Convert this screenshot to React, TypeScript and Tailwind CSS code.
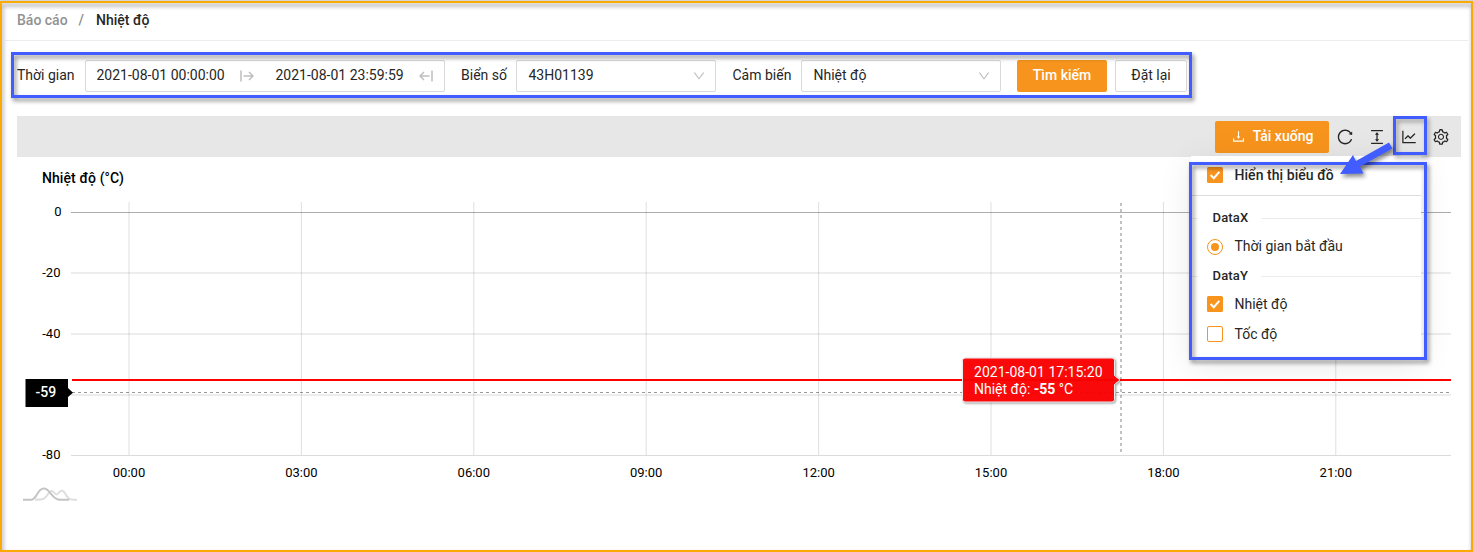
import React from "react";
import {
  AiOutlineColumnHeight,
  AiOutlineDown,
  AiOutlineDownload,
  AiOutlineLineChart,
  AiOutlineReload,
  AiOutlineSetting,
} from "react-icons/ai";

const yTicks = [
  { label: "0", y: 55.5, labelX: 61.5 },
  { label: "-20", y: 116, labelX: 60.5 },
  { label: "-40", y: 177, labelX: 60.5 },
  { label: "-60", y: 238, labelX: 60.5 },
  { label: "-80", y: 298.5, labelX: 60.5 },
];

const xTicks = [
  { label: "00:00", x: 129 },
  { label: "03:00", x: 301.4 },
  { label: "06:00", x: 473.8 },
  { label: "09:00", x: 646.2 },
  { label: "12:00", x: 818.6 },
  { label: "15:00", x: 991 },
  { label: "18:00", x: 1163.4 },
  { label: "21:00", x: 1335.8 },
];

function RangeArrow({ flip = false }: { flip?: boolean }) {
  return (
    <svg
      className={flip ? "-scale-x-100" : ""}
      width="14"
      height="12"
      viewBox="0 0 14 12"
      fill="none"
      stroke="#bfbfbf"
      strokeWidth="1.5"
    >
      <path d="M1 0.5V11.5M3.500 6H13M9 2L13 6L9 10" />
    </svg>
  );
}

function SelectBox({ value }: { value: string }) {
  return (
    <div className="flex h-8 w-[200px] items-center justify-between rounded-[2px] border border-[#d9d9d9] bg-white pl-[11.5px] pr-[9px]">
      <span className="relative -top-px">{value}</span>
      <AiOutlineDown className="size-[14px] text-[#bfbfbf]" />
    </div>
  );
}

function Check({ checked }: { checked: boolean }) {
  return checked ? (
    <svg width="16" height="16" viewBox="0 0 16 16" className="shrink-0">
      <rect width="16" height="16" rx="1.5" fill="#f7941d" />
      <path d="M3.6 8L6.8 11.2L12.3 4.9" fill="none" stroke="#fff" strokeWidth="2" />
    </svg>
  ) : (
    <span className="size-4 shrink-0 rounded-[2px] border border-[#f7941d] bg-white" />
  );
}

function Divider({ label }: { label: string }) {
  return (
    <div className="flex h-[18px] items-center text-[13px] font-medium">
      <span className="h-px w-[7px] bg-[#ececec]" />
      <span className="ml-[14.5px] mr-[12.5px] tracking-[0.15px]">{label}</span>
      <span className="h-px flex-1 bg-[#ececec]" />
    </div>
  );
}

function Chart() {
  return (
    <svg width="1444" height="395" viewBox="17 0 1444 395" className="block font-[Roboto,sans-serif]">
      <text x="42" y="26" fontSize="14" fontWeight="500" textLength="82">
        Nhiệt độ (°C)
      </text>
      <g stroke="#000" strokeOpacity="0.13">
        {xTicks.map((t) => (
          <line key={t.label} x1={t.x} x2={t.x} y1="45" y2="298" />
        ))}
        {yTicks.map((t, i) => (
          <line key={t.label} x1="71" x2="1451" y1={t.y} y2={t.y} strokeOpacity={i === 0 ? 0.32 : 0.14} />
        ))}
      </g>
      <g fontSize="13">
        {yTicks.filter((t) => t.label !== "-60").map((t) => (
          <text key={t.label} x={t.labelX} y={Math.floor(t.y) + 4} textAnchor="end">
            {t.label}
          </text>
        ))}
        {xTicks.map((t) => (
          <text key={t.label} x={t.x} y="320" textAnchor="middle">
            {t.label}
          </text>
        ))}
      </g>
      <g stroke="#000" strokeOpacity="0.4" strokeDasharray="3 3">
        <path d="M72 235.5H1451" />
        <path d="M1121 46V298" strokeWidth="2" strokeOpacity="0.24" />
      </g>
      <path d="M72 223H1451" stroke="#f00" strokeWidth="2" />
      <path d="M25.5 222H68V231L73 235.8L68 240V250H25.5Z" fill="#000" />
      <text x="45.8" y="240" fontSize="14" fill="#fff" textAnchor="middle" fontWeight="500">
        -59
      </text>
      <path
        d="M965 201H1112Q1114.500 201 1114.500 203.500V218.500L1120 223L1114.500 227.500V242.500Q1114.500 245 1112 245H965Q962.500 245 962.500 242.500V203.500Q962.500 201 965 201Z"
        fill="#f00"
        fillOpacity="0.94"
        stroke="#eee"
        strokeWidth="1"
        className="drop-shadow-[1px_1px_1px_rgba(0,0,0,0.4)]"
      />
      <g fill="#fff" fontSize="14">
        <text x="974" y="220" textLength="128.500">
          2021-08-01 17:15:20
        </text>
        <text x="974" y="237">
          Nhiệt độ: <tspan fontWeight="700">-55</tspan> °C
        </text>
      </g>
      <g fill="none" strokeWidth="2">
        <path
          d="M35 342.800C45 342.800 45 341.500 48 337C50 334 52 333 54 335.500C56 338 57 338 59 335.500C62 332 64 334 66 338C69 342.500 69 342.800 77 342.800"
          stroke="#dedede"
        />
        <path d="M23 342.800H31C37 342.800 37 331.500 44 331.500C50 331.500 52 342.800 60 342.800H69" stroke="#c4c4c4" />
      </g>
    </svg>
  );
}

export default function App() {
  return (
    <div className="relative h-[552px] w-[1473px] overflow-hidden bg-white px-[5px] font-[Roboto,sans-serif] text-[14px] text-[#262626]">
      <header className="flex h-[41px] items-center border-b border-[#ededed] pl-3 font-medium">
        <span className="text-[#929292]">Báo cáo</span>
        <span className="ml-[11px] mr-3 text-[#8c8c8c]">/</span>
        <span>Nhiệt độ</span>
      </header>

      <div className="mt-[19px] flex h-8 items-center pl-3">
        <span className="relative -top-px w-[68px]">Thời gian</span>
        <div className="flex h-8 w-[360px] items-center rounded-[2px] border border-[#d9d9d9]">
          <span className="relative -top-px ml-[10.5px] w-[128.5px] whitespace-nowrap">2021-08-01 00:00:00</span>
          <span className="ml-[15px]"><RangeArrow /></span>
          <span className="relative -top-px ml-[21.5px] w-[128.5px] whitespace-nowrap">2021-08-01 23:59:59</span>
          <span className="ml-[15px]"><RangeArrow flip /></span>
        </div>
        <span className="relative -top-px ml-4 w-[55px]">Biển số</span>
        <SelectBox value="43H01139" />
        <span className="relative -top-px ml-[16.5px] w-[68.5px]">Cảm biến</span>
        <SelectBox value="Nhiệt độ" />
        <button className="ml-4 h-8 w-[90px] rounded-[2px] bg-[#f7941d] pb-0.5 font-medium text-white">Tìm kiếm</button>
        <button className="ml-2 h-8 w-[72px] rounded-[2px] border border-[#d9d9d9] pb-0.5">Đặt lại</button>
      </div>

      <main className="mx-3 mr-[7px] mt-6">
        <div className="flex h-[41px] items-center justify-end bg-[#e7e7e7] pr-[11px]">
          <button className="mr-[7px] flex h-8 w-[114px] items-center justify-center gap-[7px] rounded-[2px] bg-[#f7941d] text-white">
            <AiOutlineDownload className="size-[15px]" />
            <span className="font-medium">Tải xuống</span>
          </button>
          <div className="flex gap-[14px]">
            <AiOutlineReload className="size-[18px]" />
            <AiOutlineColumnHeight className="size-[18px]" />
            <AiOutlineLineChart className="size-[18px]" />
            <AiOutlineSetting className="size-[18px]" />
          </div>
        </div>
        <Chart />
      </main>

      <section className="absolute left-[1191px] top-[156px] h-[203px] w-[230px] bg-white shadow-[0_6px_32px_rgba(0,0,0,0.09)]">
        <label className="flex h-10 items-center gap-[11.5px] border-b border-[#dcdcdc] pl-4 font-medium">
          <span className="relative -top-px">
            <Check checked />
          </span>
          <span className="tracking-[0.05px]">Hiển thị biểu đồ</span>
        </label>
        <div className="pt-[13px]">
          <Divider label="DataX" />
          <label className="mt-1 flex h-[30px] items-center gap-[11.5px] pl-4">
            <span className="relative top-px flex size-4 items-center justify-center rounded-full border border-[#f7941d]">
              <span className="size-2 rounded-full bg-[#f7941d]" />
            </span>
            <span>Thời gian bắt đầu</span>
          </label>
          <div className="mt-1.5">
            <Divider label="DataY" />
          </div>
          <label className="mt-1 flex h-[30px] items-center gap-[11.5px] pl-4">
            <Check checked />
            <span>Nhiệt độ</span>
          </label>
          <label className="flex h-[30px] items-center gap-[11.5px] pl-4">
            <Check checked={false} />
            <span>Tốc độ</span>
          </label>
        </div>
      </section>

      <div className="pointer-events-none absolute left-[11px] top-[52px] h-[46px] w-[1181px] border-3 border-[#415cff] drop-shadow-[2px_3px_2px_rgba(0,0,0,0.45)]" />
      <div className="pointer-events-none absolute left-[1393px] top-[116px] h-[39px] w-[34px] border-3 border-[#415cff] drop-shadow-[2px_3px_2px_rgba(0,0,0,0.35)]" />
      <div className="pointer-events-none absolute left-[1189px] top-[162px] h-[198px] w-[238px] border-3 border-[#415cff] drop-shadow-[2px_3px_2px_rgba(0,0,0,0.45)]" />
      <svg
        className="pointer-events-none absolute left-[1335px] top-[138px] drop-shadow-[2px_3px_2px_rgba(0,0,0,0.45)]"
        width="62"
        height="44"
        viewBox="0 0 62 44"
      >
        <path d="M5 36L18 17L21 23L54 4.500L57.500 10.500L25 28.500L28.500 35.500Z" fill="#415cff" />
      </svg>
      <div className="pointer-events-none absolute inset-0 border-t border-[#d5dbe2]">
        <div className="h-full border-2 border-[#fbaa03] drop-shadow-[1px_3px_2px_rgba(0,0,0,0.45)]" />
      </div>
    </div>
  );
}
